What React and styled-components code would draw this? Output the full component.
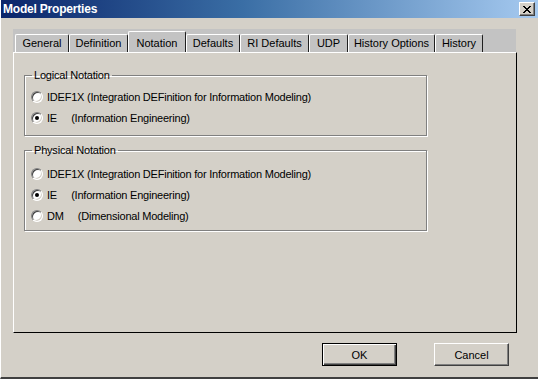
import React from "react";
import styled, { createGlobalStyle } from "styled-components";

const Global = createGlobalStyle`
  html, body { margin: 0; padding: 0; background: #d4d0c8; }
  body { font-family: "Liberation Sans", Arial, sans-serif; font-size: 11px; color: #000; }
`;

const Window = styled.div`
  width: 538px;
  height: 379px;
  box-sizing: border-box;
  background: #d4d0c8;
  border-left: 1px solid #fff;
  border-bottom: 2px solid #404040;
  display: flex;
  flex-direction: column;
  overflow: hidden;
`;

const TitleBar = styled.div`
  height: 18px;
  margin-left: -1px;
  background: linear-gradient(to right, #0a246a, #3a6ea5 45%, #a6caf0);
  display: flex;
  align-items: center;
  justify-content: space-between;
  padding: 0 3px 0 3px;
`;

const Title = styled.span`
  color: #fff;
  font-weight: bold;
  font-size: 12px;
  letter-spacing: -0.2px;
`;

const CloseButton = styled.div`
  width: 16px;
  height: 14px;
  box-sizing: border-box;
  background: #d4d0c8;
  border: 1px solid;
  border-color: #fff #404040 #404040 #fff;
  box-shadow: inset -1px -1px 0 #808080;
  display: flex;
  align-items: center;
  justify-content: center;
`;

const Body = styled.div`
  flex: 1;
  display: flex;
  flex-direction: column;
  padding: 11px 0 0 12px;
`;

const TabStrip = styled.div`
  width: 503px;
  height: 23px;
  background: #c3c3c3;
  display: flex;
  align-items: flex-end;
  padding-left: 2px;
  box-sizing: border-box;
`;

const Tab = styled.div`
  width: ${(p) => p.$w}px;
  height: ${(p) => (p.$active ? 21 : 18)}px;
  box-sizing: border-box;
  border-top: 1px solid #fff;
  border-left: 1px solid #fff;
  border-right: 1px solid #202020;
  background: #c3c3c3;
  display: flex;
  align-items: flex-end;
  justify-content: center;
  padding-bottom: 3px;
  border-radius: 2px 2px 0 0;
`;

const Panel = styled.div`
  width: 504px;
  height: 281px;
  box-sizing: border-box;
  border-top: 1px solid #fff;
  border-left: 1px solid #fff;
  border-right: 1px solid #000;
  border-bottom: 1px solid #000;
  padding: 16px 0 0 10px;
  display: flex;
  flex-direction: column;
  gap: 8px;
`;

const Group = styled.fieldset`
  width: 403px;
  height: ${(p) => p.$h}px;
  box-sizing: border-box;
  margin: 0;
  padding: ${(p) => p.$pt}px 0 0 6px;
  border: 1px solid #808080;
  box-shadow: 1px 1px 0 #fff, inset 1px 1px 0 #fff;
  display: flex;
  flex-direction: column;
`;

const Legend = styled.legend`
  padding: 0 2px;
  margin-left: 1px;
  line-height: 13px;
  letter-spacing: -0.2px;
`;

const Option = styled.label`
  height: 21px;
  display: flex;
  align-items: center;
  gap: 4px;
  white-space: pre;
  letter-spacing: -0.22px;
`;

const Radio = styled.span`
  width: 12px;
  height: 12px;
  box-sizing: border-box;
  border-radius: 50%;
  background: #fff;
  border: 1px solid;
  border-color: #808080 #fff #fff #808080;
  box-shadow: inset 1px 1px 0 #404040, inset -1px -1px 0 #d4d0c8;
  display: flex;
  align-items: center;
  justify-content: center;

  &::after {
    content: "";
    width: 4px;
    height: 4px;
    border-radius: 50%;
    background: ${(p) => (p.$checked ? "#000" : "transparent")};
  }
`;

const ButtonRow = styled.div`
  display: flex;
  gap: 37px;
  padding: 10px 0 0 309px;
`;

const Button = styled.div`
  width: 75px;
  height: 23px;
  box-sizing: border-box;
  display: flex;
  align-items: center;
  justify-content: center;
  background: #d4d0c8;
  border: 1px solid;
  border-color: ${(p) => (p.$default ? "#000" : "#fff #404040 #404040 #fff")};
  box-shadow: ${(p) =>
    p.$default
      ? "inset 1px 1px 0 #fff, inset -1px -1px 0 #404040, inset -2px -2px 0 #808080"
      : "inset -1px -1px 0 #808080"};
`;

const groups = [
  {
    title: "Logical Notation",
    h: 67,
    pt: 4,
    options: [
      { text: "IDEF1X (Integration DEFinition for Information Modeling)" },
      { text: "IE     (Information Engineering)", checked: true },
    ],
  },
  {
    title: "Physical Notation",
    h: 87,
    pt: 6,
    options: [
      { text: "IDEF1X (Integration DEFinition for Information Modeling)" },
      { text: "IE     (Information Engineering)", checked: true },
      { text: "DM     (Dimensional Modeling)" },
    ],
  },
];

const tabs = [
  ["General", 54],
  ["Definition", 59],
  ["Notation", 58],
  ["Defaults", 54],
  ["RI Defaults", 69],
  ["UDP", 39],
  ["History Options", 87],
  ["History", 48],
];

export default function App() {
  return (
    <>
      <Global />
      <Window>
        <TitleBar>
          <Title>Model Properties</Title>
          <CloseButton>
            <svg width="8" height="7" viewBox="0 0 8 7">
              <path d="M0 0L7 7M1 0L8 7M7 0L0 7M8 0L1 7" stroke="#000" strokeWidth="1" />
            </svg>
          </CloseButton>
        </TitleBar>
        <Body>
          <TabStrip>
            {tabs.map(([name, w]) => (
              <Tab key={name} $w={w} $active={name === "Notation"}>
                {name}
              </Tab>
            ))}
          </TabStrip>
          <Panel>
            {groups.map((g) => (
              <Group key={g.title} $h={g.h} $pt={g.pt}>
                <Legend>{g.title}</Legend>
                {g.options.map((o) => (
                  <Option key={o.text}>
                    <Radio $checked={o.checked} />
                    {o.text}
                  </Option>
                ))}
              </Group>
            ))}
          </Panel>
          <ButtonRow>
            <Button $default>OK</Button>
            <Button>Cancel</Button>
          </ButtonRow>
        </Body>
      </Window>
    </>
  );
}
